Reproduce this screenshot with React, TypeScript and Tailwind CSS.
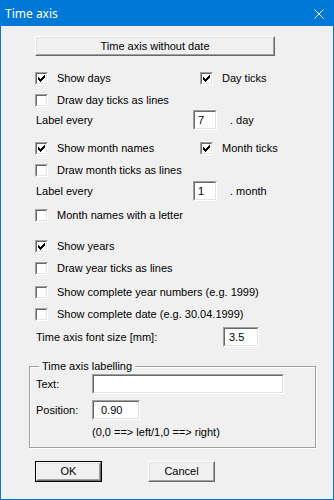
import React from "react";

function Tick() {
  // classic 7x7 check glyph
  const cols = [2, 3, 4, 3, 2, 1, 0];
  return (
    <svg width="7" height="7" viewBox="0 0 7 7" shapeRendering="crispEdges">
      {cols.map((y, x) => (
        <rect key={x} x={x} y={y} width="1" height="3" fill="#000" />
      ))}
    </svg>
  );
}

function Check({ checked }: { checked?: boolean }) {
  return (
    <span className="inline-block w-[13px] h-[13px] border border-t-[#a0a0a0] border-l-[#a0a0a0] border-b-white border-r-white shrink-0">
      <span className="flex items-center justify-center w-full h-full border border-t-[#696969] border-l-[#696969] border-b-[#e3e3e3] border-r-[#e3e3e3] bg-white">
        {checked && <Tick />}
      </span>
    </span>
  );
}

function CheckItem({ label, checked, className }: { label: string; checked?: boolean; className?: string }) {
  return (
    <label className={"flex items-center " + (className ?? "")}>
      <Check checked={checked} />
      <span className="ml-[9px] whitespace-nowrap">{label}</span>
    </label>
  );
}

function Field({ value, className, pad }: { value: string; className: string; pad?: string }) {
  return (
    <div className={"h-[20px] border border-t-[#a0a0a0] border-l-[#a0a0a0] border-b-white border-r-white shrink-0 " + className}>
      <div className={"h-full border border-t-[#696969] border-l-[#696969] border-b-[#e3e3e3] border-r-[#e3e3e3] bg-white flex items-center " + (pad ?? "")}>
        {value}
      </div>
    </div>
  );
}

function Button({ label, className, isDefault }: { label: string; className: string; isDefault?: boolean }) {
  const face = (
    <div className="h-full border border-t-white border-l-white border-b-[#696969] border-r-[#696969]">
      <div className="h-full border border-t-[#e3e3e3] border-l-[#e3e3e3] border-b-[#a0a0a0] border-r-[#a0a0a0] bg-[#f0f0f0] flex items-center justify-center">
        {label}
      </div>
    </div>
  );
  return (
    <div className={"shrink-0 " + className + (isDefault ? " border border-black" : "")}>{face}</div>
  );
}

export default function App() {
  return (
    <div className="w-[334px] h-[500px] border border-[#0078d7] bg-[#f0f0f0] flex flex-col font-['Liberation_Sans',Arial,sans-serif] text-[11px] text-black leading-none select-none">
      <div className="h-[25px] bg-[#0078d7] flex items-center justify-between pl-[4px] pr-[9px] shrink-0">
        <span className="text-white text-[12px] font-['Noto_Sans',sans-serif]">Time axis</span>
        <svg width="10" height="10" viewBox="0 0 10 10">
          <path d="M0.5 0.5 L9.5 9.5 M9.5 0.5 L0.5 9.5" stroke="#fff" strokeWidth="1" fill="none" />
        </svg>
      </div>

      <div className="flex flex-col pl-[27px]">
        <Button label="Time axis without date" className="ml-[7px] mt-[10px] w-[240px] h-[20px]" />

        <div className="flex items-center h-[20px] mt-[12px] ml-[7px]">
          <CheckItem label="Show days" checked className="w-[165px]" />
          <CheckItem label="Day ticks" checked />
        </div>
        <div className="flex items-center h-[20px] mt-[2px] ml-[7px]">
          <CheckItem label="Draw day ticks as lines" />
        </div>
        <div className="flex items-center h-[20px] ml-[8px]">
          <span className="w-[157px]">Label every</span>
          <Field value="7" className="w-[24px]" pad="pl-[3px]" />
          <span className="ml-[13px]">. day</span>
        </div>

        <div className="flex items-center h-[20px] mt-[8px] ml-[7px]">
          <CheckItem label="Show month names" checked className="w-[165px]" />
          <CheckItem label="Month ticks" checked />
        </div>
        <div className="flex items-center h-[20px] mt-[2px] ml-[7px]">
          <CheckItem label="Draw month ticks as lines" />
        </div>
        <div className="flex items-center h-[20px] mt-[1px] ml-[8px]">
          <span className="w-[157px]">Label every</span>
          <Field value="1" className="w-[24px]" pad="pl-[3px]" />
          <span className="ml-[13px]">. month</span>
        </div>
        <div className="flex items-center h-[20px] mt-[4px] ml-[7px]">
          <CheckItem label="Month names with a letter" />
        </div>

        <div className="flex items-center h-[20px] mt-[11px] ml-[7px]">
          <CheckItem label="Show years" checked />
        </div>
        <div className="flex items-center h-[20px] mt-[2px] ml-[7px]">
          <CheckItem label="Draw year ticks as lines" />
        </div>
        <div className="flex items-center h-[20px] mt-[4px] ml-[7px]">
          <CheckItem label="Show complete year numbers (e.g. 1999)" />
        </div>
        <div className="flex items-center h-[20px] mt-[2px] ml-[7px]">
          <CheckItem label="Show complete date (e.g. 30.04.1999)" />
        </div>
        <div className="flex items-center h-[20px] mt-[3px] ml-[8px]">
          <span className="w-[187px]">Time axis font size [mm]:</span>
          <Field value="3.5" className="w-[36px]" pad="pl-[4px]" />
        </div>

        <div className="relative mt-[19px] ml-[1px] w-[287px] border border-[#a0a0a0] shadow-[inset_1px_1px_0_#fff,1px_1px_0_#fff] pt-[7px] pb-[7px] pl-[6px]">
          <span className="absolute top-[-6px] left-[9px] px-[3px] bg-[#f0f0f0]">Time axis labelling</span>
          <div className="flex items-center h-[20px]">
            <span className="w-[56px]">Text:</span>
            <Field value="" className="w-[192px]" />
          </div>
          <div className="flex items-center h-[20px] mt-[6px]">
            <span className="w-[56px]">Position:</span>
            <Field value="0.90" className="w-[48px]" pad="pl-[7px]" />
          </div>
          <div className="flex items-center h-[16px] mt-[4px] pl-[56px]">
            (0,0 ==&gt; left/1,0 ==&gt; right)
          </div>
        </div>

        <div className="flex mt-[13px] ml-[7px]">
          <Button label="OK" isDefault className="w-[67px] h-[21px]" />
          <Button label="Cancel" className="ml-[46px] w-[67px] h-[21px]" />
        </div>
      </div>
    </div>
  );
}
